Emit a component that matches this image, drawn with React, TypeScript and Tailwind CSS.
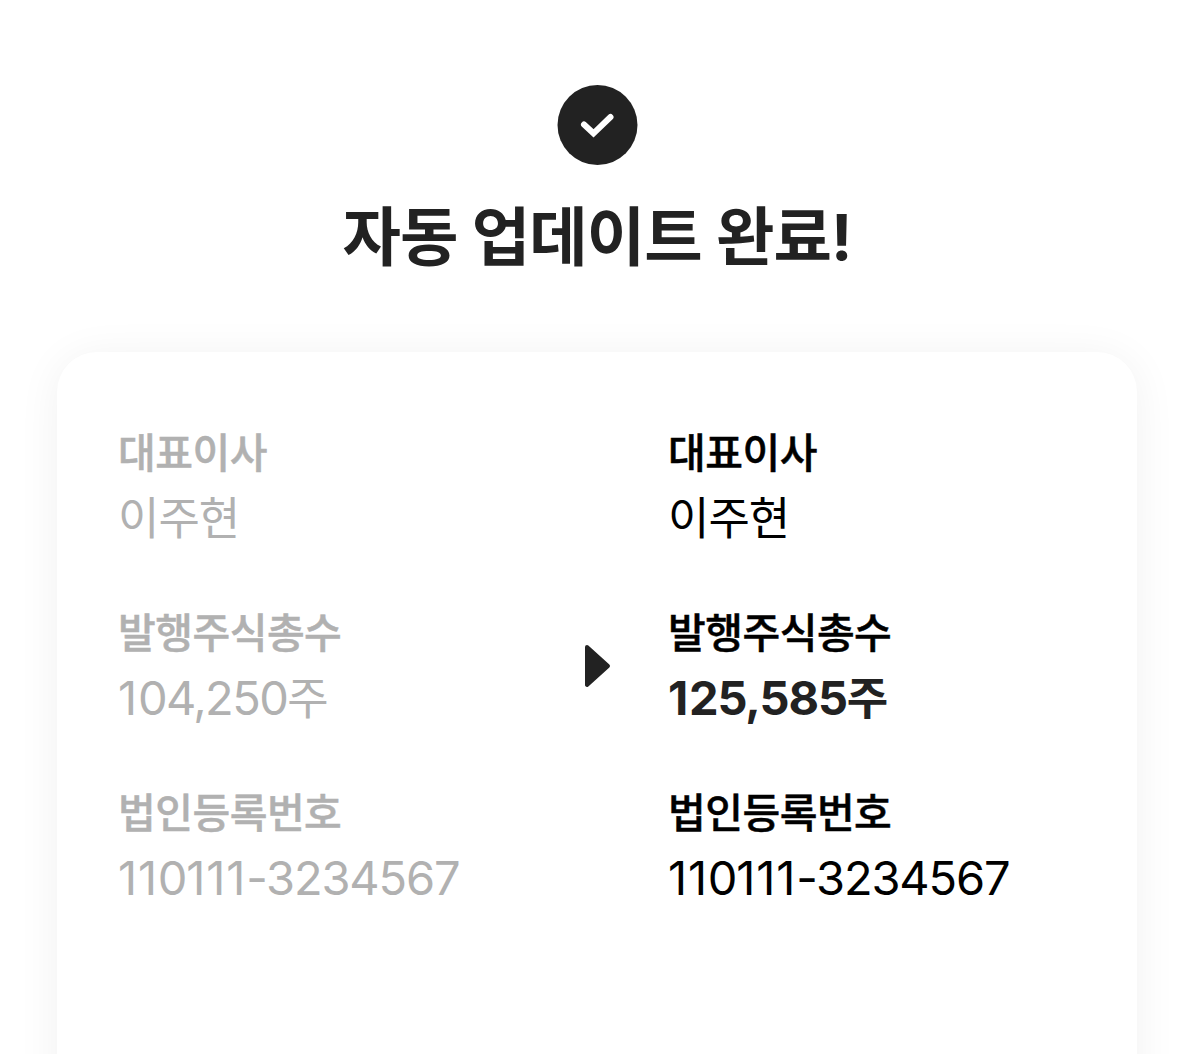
interface FieldProps {
  label: string;
  value: string;
  unit?: string;
  muted?: boolean;
  highlight?: boolean;
}

const BEFORE = [
  { label: "대표이사", value: "", unit: "이주현" },
  { label: "발행주식총수", value: "104,250", unit: "주" },
  { label: "법인등록번호", value: "110111-3234567" },
];

const AFTER = [
  { label: "대표이사", value: "", unit: "이주현" },
  { label: "발행주식총수", value: "125,585", unit: "주", highlight: true },
  { label: "법인등록번호", value: "110111-3234567" },
];

const Field = ({ label, value, unit, muted, highlight }: FieldProps) => {
  return (
    <div className={`flex h-[180px] flex-col whitespace-nowrap ${muted ? "text-[#b1b1b1]" : "text-black"}`}>
      <dt className="h-[66px] text-[41px] leading-[67px] font-medium tracking-[-0.5px] [-webkit-text-stroke:0.5px]">
        {label}
      </dt>
      <dd
        className={`h-[66px] text-[47px] leading-[63px] ${
          highlight ? "font-bold text-[#222]" : "font-normal"
        } ${unit && muted ? "tracking-[-1.6px]" : "tracking-[-1.15px]"}`}
      >
        {/* runs of the narrow "1" get looser spacing */}
        {value.split(/(1+)/).map((part, index) => (
          <span key={index} className={part.startsWith("1") ? "tracking-[0.8px]" : ""}>
            {part}
          </span>
        ))}
        {unit && <span className="text-[45px] tracking-[-1px]">{unit}</span>}
      </dd>
    </div>
  );
};

const App = () => {
  return (
    <main className="flex h-[1054px] w-[1194px] flex-col items-center overflow-hidden bg-white pt-[85px] font-['Inter','Noto_Sans_CJK_KR',sans-serif]">
      <svg className="shrink-0" width="82" height="80" viewBox="0 0 82 80" fill="none">
        <circle cx="41.5" cy="40" r="40" fill="#222" />
        <path d="M28 39.500 37.500 48.300 54.500 32" stroke="#fff" strokeWidth="6" strokeLinecap="round" />
      </svg>
      <h1 className="mt-[27px] h-[90px] shrink-0 text-[63.5px] leading-[89px] font-bold tracking-[-0.9px] whitespace-nowrap text-[#222]">
        자동 업데이트 완료!
      </h1>
      <section className="mt-[70px] flex h-[860px] w-[1080px] shrink-0 rounded-[40px] bg-white pt-[68px] pl-[61px] shadow-[0_4px_44px_rgba(0,0,0,0.06)]">
        <dl className="w-[467px]">
          {BEFORE.map((field) => (
            <Field key={field.label} {...field} muted />
          ))}
        </dl>
        <svg className="mt-[224px] mr-[57px]" width="26" height="44" viewBox="0 0 26 44">
          <path d="M2 3 23 22 2 41Z" fill="#222" stroke="#222" strokeWidth="4" strokeLinejoin="round" />
        </svg>
        <dl>
          {AFTER.map((field) => (
            <Field key={field.label} {...field} />
          ))}
        </dl>
      </section>
    </main>
  );
};

export default App;
